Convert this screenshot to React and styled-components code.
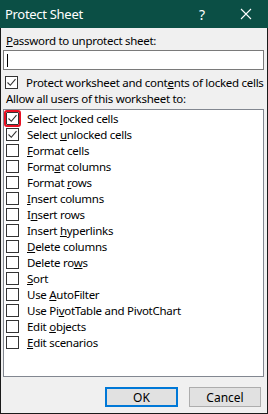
import styled, { createGlobalStyle } from "styled-components";

const GlobalStyle = createGlobalStyle`
  html, body {
    margin: 0;
    padding: 0;
    background: #f0f0f0;
  }
  body {
    font-family: "Noto Sans", "Open Sans", sans-serif;
    font-size: 11.5px;
    letter-spacing: -0.28px;
    color: #000;
  }
`;

const Dialog = styled.div`
  width: 268px;
  height: 414px;
  box-sizing: border-box;
  background: #f0f0f0;
  border: 1px solid #1a1a1a;
  border-top: none;
  display: flex;
  flex-direction: column;
`;

const TitleBar = styled.div`
  height: 28px;
  background: #0b4f45;
  color: #fff;
  display: flex;
  align-items: center;
  padding-left: 5px;
  font-size: 13px;
  letter-spacing: -0.3px;
  margin: 0 -1px;
`;

const Title = styled.span`
  flex: 1;
`;

const TitleButton = styled.span`
  width: 44px;
  display: flex;
  justify-content: center;
  align-items: center;
  font-size: 14px;
`;

const Body = styled.div`
  flex: 1;
  display: flex;
  flex-direction: column;
  padding: 5px 2px 0 2px;
`;

const Label = styled.div`
  line-height: 16px;
  height: 16px;
  padding-left: 3px;
  margin-top: ${(p) => p.$top || 0}px;
`;

const Input = styled.div`
  height: 20px;
  box-sizing: border-box;
  margin-top: 1px;
  background: #fff;
  border: 1px solid #7a7a7a;
  margin-right: 1px;
  display: flex;
  align-items: center;
  padding-left: 3px;
`;

const Caret = styled.span`
  width: 1px;
  height: 13px;
  background: #000;
`;

const Row = styled.label`
  display: flex;
  align-items: center;
  height: 16px;
  flex: none;
  gap: 8px;
  padding-left: ${(p) => p.$indent || 0}px;
  margin-top: ${(p) => p.$top || 0}px;
  white-space: nowrap;
`;

const Box = styled.span`
  width: 13px;
  height: 13px;
  box-sizing: border-box;
  border: 1px solid #333;
  background: #fff;
  display: flex;
  align-items: center;
  justify-content: center;
  flex: none;
  outline: ${(p) => (p.$focus ? "2px solid #e81123" : "none")};
  border-radius: ${(p) => (p.$focus ? "1px" : "0")};
`;

const List = styled.div`
  margin-top: 2px;
  height: 268px;
  flex: none;
  box-sizing: border-box;
  background: #fff;
  border: 1px solid #828790;
  margin-right: 1px;
  padding: 0 0 0 1px;
  display: flex;
  flex-direction: column;
`;

const Footer = styled.div`
  display: flex;
  justify-content: flex-end;
  gap: 11px;
  padding: 10px 4px 0 0;
`;

const Button = styled.button`
  width: ${(p) => p.$w}px;
  height: 20px;
  box-sizing: border-box;
  font: inherit;
  font-size: 12px;
  background: #e1e1e1;
  border: ${(p) => (p.$primary ? "2px solid #0078d7" : "1px solid #adadad")};
  padding: 0;
  color: #000;
`;

const Check = () => (
  <svg width="11" height="11" viewBox="0 0 11 11">
    <path d="M1.5 5.5 L4.3 8.3 L9.5 2.2" fill="none" stroke="#333" strokeWidth="1.1" />
  </svg>
);

const Key = ({ text, k }) => {
  if (k == null) return text;
  return (
    <>
      {text.slice(0, k)}
      <u>{text[k]}</u>
      {text.slice(k + 1)}
    </>
  );
};

const perms = [
  ["Select locked cells", 7, true, true],
  ["Select unlocked cells", 7, true],
  ["Format cells", 0],
  ["Format columns", 4],
  ["Format rows", 7],
  ["Insert columns", 0],
  ["Insert rows", 1],
  ["Insert hyperlinks", 7],
  ["Delete columns", 0],
  ["Delete rows", 9],
  ["Sort", 0],
  ["Use AutoFilter", 4],
  ["Use PivotTable and PivotChart", 6],
  ["Edit objects", 5],
  ["Edit scenarios", 0],
];

export default function App() {
  return (
    <>
      <GlobalStyle />
      <Dialog>
        <TitleBar>
          <Title>Protect Sheet</Title>
          <TitleButton>?</TitleButton>
          <TitleButton>
            <svg width="12" height="12" viewBox="0 0 12 12">
              <path d="M1 1 L11 11 M11 1 L1 11" stroke="#fff" strokeWidth="1.1" />
            </svg>
          </TitleButton>
        </TitleBar>
        <Body>
          <Label>
            <Key text="Password to unprotect sheet:" k={0} />
          </Label>
          <Input>
            <Caret />
          </Input>
          <Row $indent={2} $top={4}>
            <Box>
              <Check />
            </Box>
            <span>
              <Key text="Protect worksheet and contents of locked cells" k={26} />
            </span>
          </Row>
          <Label $top={1}>Allow all users of this worksheet to:</Label>
          <List>
            {perms.map(([t, k, checked, focus]) => (
              <Row key={t} $indent={1}>
                <Box $focus={focus}>{checked && <Check />}</Box>
                <span>
                  <Key text={t} k={k} />
                </span>
              </Row>
            ))}
          </List>
          <Footer>
            <Button $w={73} $primary>
              OK
            </Button>
            <Button $w={72}>Cancel</Button>
          </Footer>
        </Body>
      </Dialog>
    </>
  );
}
